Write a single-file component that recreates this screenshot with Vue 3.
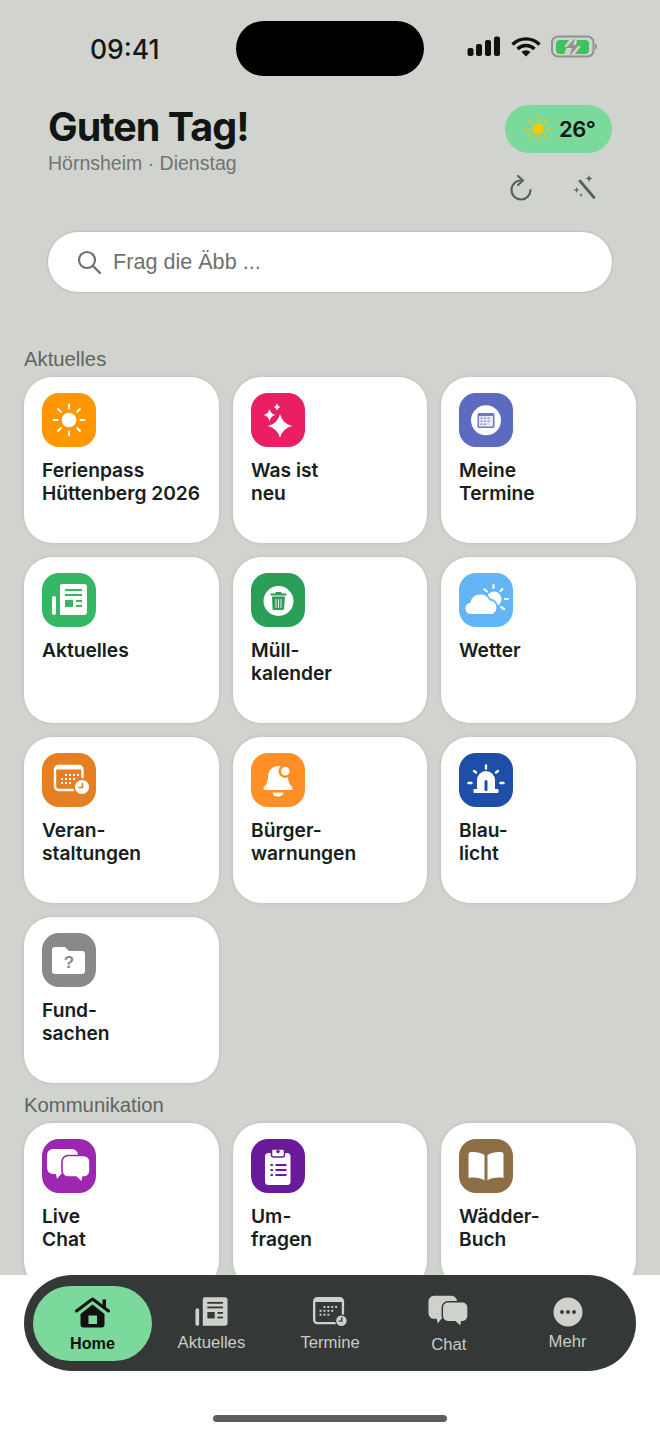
<script setup>
const W = 'fill="#fff"'
const rays = (cx, cy, r1, r2, n, color, sw) => Array.from({ length: n }, (_, i) => {
  const a = (i * 2 * Math.PI) / n
  const p = (v) => v.toFixed(2)
  return `<line x1="${p(cx + r1 * Math.cos(a))}" y1="${p(cy + r1 * Math.sin(a))}" x2="${p(cx + r2 * Math.cos(a))}" y2="${p(cy + r2 * Math.sin(a))}" stroke="${color}" stroke-width="${sw}" stroke-linecap="round"/>`
}).join('')
const star = (x, y, r, k = 0.2) => `<path ${W} d="M${x} ${y - r}Q${x + r * k} ${y - r * k} ${x + r} ${y}Q${x + r * k} ${y + r * k} ${x} ${y + r}Q${x - r * k} ${y + r * k} ${x - r} ${y}Q${x - r * k} ${y - r * k} ${x} ${y - r}Z"/>`

const news = (fg, bg) => `<path fill="${fg}" d="M20 11h22a3 3 0 0 1 3 3v25a3 3 0 0 1-3 3H18V13a2 2 0 0 1 2-2Z"/><rect x="10" y="23" width="4" height="19" rx="2" fill="${fg}"/><rect x="23" y="16" width="17" height="2" fill="${bg}"/><rect x="23" y="21" width="17" height="2" fill="${bg}"/><rect x="23" y="27" width="8" height="7" fill="${bg}"/><rect x="34" y="27" width="6" height="2" fill="${bg}"/><rect x="34" y="32" width="6" height="2" fill="${bg}"/>`
const bubbles = (fg, bg) => `<path fill="${fg}" d="M11 10h19a6 6 0 0 1 6 6v13a6 6 0 0 1-6 6H19l-4 5-1-5h-3a6 6 0 0 1-6-6V16a6 6 0 0 1 6-6Z"/><path fill="${fg}" stroke="${bg}" stroke-width="1.600" d="M26 16.500h16a6 6 0 0 1 6 6v9.500a6 6 0 0 1-6 6h-1l-1 5.500-6-5.500h-8a6 6 0 0 1-6-6v-9.500a6 6 0 0 1 6-6Z"/>`

const sections = [
  {
    title: 'Aktuelles',
    items: [
      { label: ['Ferienpass', 'Hüttenberg 2026'], bg: '#ff9800', svg: `<circle cx="27" cy="27" r="7.300" ${W}/>` + rays(27, 27, 11.500, 15.500, 8, '#fff', 2) },
      { label: ['Was ist', 'neu'], bg: '#e91e63', svg: star(29, 33, 12) + star(18.500, 22, 6) + star(26, 14, 3.500) },
      { label: ['Meine', 'Termine'], bg: '#5c6bc0', svg: `<circle cx="27" cy="27.300" r="15" ${W}/><rect x="18.500" y="20" width="17" height="15" rx="1.500" fill="#6b79c9"/><rect x="20" y="23" width="14" height="10.500" fill="#e4e7f6"/><g fill="#8c98d6"><rect x="21.500" y="24.500" width="2" height="1.500"/><rect x="25" y="24.500" width="2" height="1.500"/><rect x="28.500" y="24.500" width="2" height="1.500"/><rect x="21.500" y="27.500" width="2" height="1.500"/><rect x="25" y="27.500" width="2" height="1.500"/><rect x="28.500" y="27.500" width="2" height="1.500"/><rect x="21.500" y="30.500" width="2" height="1.500"/><rect x="25" y="30.500" width="2" height="1.500"/></g>` },
      { label: ['Aktuelles'], bg: '#35b765', svg: news('#fff', '#35b765') },
      { label: ['Müll-', 'kalender'], bg: '#2b9e58', svg: `<circle cx="27.500" cy="28" r="15" ${W}/><path fill="#2b9e58" d="M25 19h5l.8 1.500h4.700v2h-16v-2h4.700ZM21 23.500h13l-1 12.500a1.500 1.500 0 0 1-1.500 1h-8.500a1.500 1.500 0 0 1-1.500-1Z"/><path stroke="#dff3e6" stroke-width="1" d="M25 26v9M27.500 26v9M30 26v9"/>` },
      { label: ['Wetter'], bg: '#64b5f6', svg: `<g stroke="#fff" stroke-width="2.200" stroke-linecap="round"><line x1="34.500" y1="12" x2="34.500" y2="15"/><line x1="25.500" y1="16.500" x2="28" y2="18.500"/><line x1="43.500" y1="16" x2="41.500" y2="18"/><line x1="46" y1="26" x2="49" y2="26"/><line x1="42" y1="34" x2="45" y2="36"/></g><circle cx="35" cy="26" r="7.500" ${W}/><path ${W} stroke="#64b5f6" stroke-width="1.800" d="M12 42a6.500 6.500 0 0 1-1.500-12.800A11 11 0 0 1 31 26.500a8 8 0 0 1 2 15.500Z"/>` },
      { label: ['Veran-', 'staltungen'], bg: '#e67e22', svg: `<rect x="13" y="13" width="27.500" height="24" rx="3.500" fill="none" stroke="#fff" stroke-width="2.400"/><rect x="13" y="13" width="27" height="3.500" ${W}/><g fill="#fff"><rect x="23" y="21" width="2" height="2"/><rect x="27" y="21" width="2" height="2"/><rect x="31" y="21" width="2" height="2"/><rect x="35" y="21" width="2" height="2"/><rect x="19" y="25" width="2" height="2"/><rect x="23" y="25" width="2" height="2"/><rect x="27" y="25" width="2" height="2"/><rect x="31" y="25" width="2" height="2"/><rect x="19" y="29" width="2" height="2"/><rect x="23" y="29" width="2" height="2"/><rect x="27" y="29" width="2" height="2"/></g><circle cx="40" cy="34" r="8" ${W} stroke="#e67e22" stroke-width="1.800"/><path d="M40.500 30v4.500h-4" fill="none" stroke="#e67e22" stroke-width="1.500"/>` },
      { label: ['Bürger-', 'warnungen'], bg: '#ff8f26', svg: `<path ${W} d="M27 13c-6 0-10 5-10 11 0 5-2 8-4 10-1.200 1.200-.6 3 1 3h26c1.600 0 2.200-1.800 1-3-2-2-4-5-4-10 0-6-4-11-10-11Z"/><path ${W} d="M21.500 39.500h11a5.500 4 0 0 1-11 0Z"/><circle cx="34.300" cy="18.300" r="5.500" ${W} stroke="#ff8f26" stroke-width="2.500"/>` },
      { label: ['Blau-', 'licht'], bg: '#1d4ea8', svg: `<path ${W} d="M18 36V27a9 9 0 0 1 18 0v9Z"/><rect x="14.500" y="36" width="25" height="4" rx="1" ${W}/><rect x="25.500" y="27" width="3" height="11" rx="1.500" fill="#1d4ea8"/><g stroke="#fff" stroke-width="2.400" stroke-linecap="round"><line x1="27" y1="12.500" x2="27" y2="15.500"/><line x1="15" y1="18" x2="17" y2="19.500"/><line x1="39" y1="18" x2="37" y2="19.500"/><line x1="9.500" y1="30" x2="12.500" y2="30"/><line x1="41.500" y1="30" x2="44.500" y2="30"/></g>` },
      { label: ['Fund-', 'sachen'], bg: '#888a89', svg: `<path ${W} d="M13 14h10l4 4h13a3 3 0 0 1 3 3v17a3 3 0 0 1-3 3H13a3 3 0 0 1-3-3V17a3 3 0 0 1 3-3Z"/><text x="27" y="35" text-anchor="middle" font-family="Liberation Sans" font-weight="700" font-size="17" fill="#888a89">?</text>` },
    ],
  },
  {
    title: 'Kommunikation',
    items: [
      { label: ['Live', 'Chat'], bg: '#9c27b0', svg: bubbles('#fff', '#9c27b0') },
      { label: ['Um-', 'fragen'], bg: '#6a1b9a', svg: `<rect x="14" y="14" width="25.500" height="32" rx="3.500" ${W}/><rect x="20.500" y="10" width="13" height="8" rx="2" ${W} stroke="#6a1b9a" stroke-width="1.500"/><circle cx="27" cy="12.500" r="1.700" fill="#6a1b9a"/><g fill="#6a1b9a"><rect x="19.500" y="25" width="2.400" height="2"/><rect x="19.500" y="30" width="2.400" height="2"/><rect x="19.500" y="35" width="2.400" height="2"/><rect x="24.500" y="25" width="11" height="2"/><rect x="24.500" y="30" width="11" height="2"/><rect x="24.500" y="35" width="11" height="2"/></g>` },
      { label: ['Wädder-', 'Buch'], bg: '#8d6e47', svg: `<path ${W} d="M25.500 16C22 13.500 16 12.500 12 13a2.500 2.500 0 0 0-2.500 2.500V39c5-.8 12-.5 16 2.500ZM28.500 16c3.500-2.500 9.500-3.500 13.500-3a2.500 2.500 0 0 1 2.500 2.500V39c-5-.8-12-.5-16 2.500Z"/>` },
    ],
  },
]

const tabs = [
  { label: 'Aktuelles', svg: news('#cfd1cc', '#343937'), w: 33, h: 30, box: '9.500 11 36 32', cls: '' },
  { label: 'Termine', svg: `<rect x="5" y="5" width="37" height="32" rx="4" fill="none" stroke="#cfd1cc" stroke-width="3"/><rect x="5" y="5" width="37" height="5" rx="2" fill="#cfd1cc"/><g fill="#cfd1cc"><rect x="17" y="15" width="2.500" height="2.500"/><rect x="22" y="15" width="2.500" height="2.500"/><rect x="27" y="15" width="2.500" height="2.500"/><rect x="32" y="15" width="2.500" height="2.500"/><rect x="12" y="20" width="2.500" height="2.500"/><rect x="17" y="20" width="2.500" height="2.500"/><rect x="22" y="20" width="2.500" height="2.500"/><rect x="27" y="20" width="2.500" height="2.500"/><rect x="12" y="25" width="2.500" height="2.500"/><rect x="17" y="25" width="2.500" height="2.500"/><rect x="22" y="25" width="2.500" height="2.500"/></g><circle cx="40" cy="34" r="7.500" fill="#cfd1cc" stroke="#343937" stroke-width="1.500"/><path d="M40.500 29.500v5h-4" fill="none" stroke="#343937" stroke-width="1.800"/>`, w: 35, h: 30, box: '3.500 3.500 45 38.500', cls: '' },
  { label: 'Chat', svg: bubbles('#cfd1cc', '#343937'), w: 41, h: 33, box: '4.500 9.500 44.500 35', cls: 'chat' },
  { label: 'Mehr', svg: `<circle cx="15" cy="15" r="14.500" fill="#cfd1cc"/><circle cx="9" cy="15" r="1.900" fill="#343937"/><circle cx="15" cy="15" r="1.900" fill="#343937"/><circle cx="21" cy="15" r="1.900" fill="#343937"/>`, w: 30, h: 30, box: '0 0 30 30', cls: 'more' },
]
const sunSmall = `<ellipse cx="15" cy="15" rx="5.500" ry="6" fill="#f6c800"/>` + rays(15, 15, 9, 12, 8, '#f6c800', 1.600)
</script>

<template>
  <div class="phone">
    <div class="screen">
      <div class="status">
        <span class="time">09:41</span>
        <div class="island"></div>
        <div class="status-icons">
          <svg width="34" height="21" viewBox="0 0 34 21"><rect x="0.500" y="12" width="6" height="8" rx="2" fill="#111"/><rect x="9" y="8" width="6" height="12" rx="2" fill="#111"/><rect x="18" y="4" width="6" height="16" rx="2" fill="#111"/><rect x="27" y="0.500" width="6" height="19.500" rx="2" fill="#111"/></svg>
          <svg width="30" height="21" viewBox="0 0 30 21"><path d="M1.500 8.500a19 19 0 0 1 27 0" fill="none" stroke="#111" stroke-width="3.400"/><path d="M6.500 13a12 12 0 0 1 17 0" fill="none" stroke="#111" stroke-width="3.400"/><path d="M15 20.500 10.500 16a6.500 6.500 0 0 1 9 0Z" fill="#111"/></svg>
          <svg width="47" height="24" viewBox="0 0 47 24"><rect x="1" y="1.500" width="41.500" height="20" rx="6" fill="none" stroke="#8f928e" stroke-width="2"/><path d="M9 5h9l-5 7h3l-3 7H9a4 4 0 0 1-4-4V9a4 4 0 0 1 4-4ZM26 5h8a4 4 0 0 1 4 4v6a4 4 0 0 1-4 4h-10l6-8h-5Z" fill="#3ec35c"/><path d="M24 3 15 13h6l-2.500 8L28 10h-6Z" fill="#8f928e"/><path d="M44 8.500v6a3 3 0 0 0 2-3 3 3 0 0 0-2-3Z" fill="#8f928e"/></svg>
        </div>
      </div>

      <header class="head">
        <div class="greet">
          <h1>Guten Tag!</h1>
          <p>Hörnsheim · Dienstag</p>
        </div>
        <div class="head-right">
          <div class="weather">
            <svg width="30" height="30" viewBox="0 0 30 30" v-html="sunSmall"></svg>
            <span>26°</span>
          </div>
          <div class="tools">
            <svg width="22" height="26" viewBox="0 0 22 26"><path d="M11 5.500A9.500 9.500 0 1 0 20.500 15" fill="none" stroke="#5b615e" stroke-width="2.200" stroke-linecap="round"/><path d="M8 1l5 4.500L8 10" fill="none" stroke="#5b615e" stroke-width="2.200" stroke-linecap="round" stroke-linejoin="round"/></svg>
            <svg width="24" height="24" viewBox="0 0 24 24"><path d="M8 6 22 22.500" fill="none" stroke="#5b615e" stroke-width="2.800" stroke-linecap="round"/><path d="M17 0l1 2.500 2.500 1-2.500 1-1 2.500-1-2.500-2.500-1 2.500-1ZM4.500 12l.8 2.200 2.200.8-2.200.8-.8 2.200-.8-2.200-2.200-.8 2.200-.8ZM9 18l.6 1.400L11 20l-1.400.6L9 22l-.6-1.400L7 20l1.400-.6Z" fill="#5b615e"/></svg>
          </div>
        </div>
      </header>

      <div class="search">
        <svg width="26" height="26" viewBox="0 0 26 26"><circle cx="11" cy="11" r="8" fill="none" stroke="#6d726f" stroke-width="2.200"/><path d="M17 17l7 7" stroke="#6d726f" stroke-width="2.400" stroke-linecap="round"/></svg>
        <span>Frag die Äbb ...</span>
      </div>

      <section v-for="s in sections" :key="s.title" class="sec">
        <h2>{{ s.title }}</h2>
        <div class="grid">
          <div v-for="it in s.items" :key="it.label[0]" class="card">
            <svg class="ico" width="54" height="54" viewBox="0 0 54 54" :style="{ background: it.bg }" v-html="it.svg"></svg>
            <div class="lbl">
              <div v-for="l in it.label" :key="l">{{ l }}</div>
            </div>
          </div>
        </div>
      </section>
    </div>

    <nav class="nav">
      <div class="tab active">
        <svg width="36" height="32" viewBox="0 0 36 32"><path d="M1.500 14 17.500 2l16 12" fill="none" stroke="#111" stroke-width="3" stroke-linecap="round" stroke-linejoin="round"/><rect x="27.500" y="2.500" width="3.500" height="8" fill="#111"/><path fill-rule="evenodd" fill="#111" d="M5.500 17 17.500 7.500 29.500 17v10.500a3 3 0 0 1-3 3h-18a3 3 0 0 1-3-3ZM13.500 18.500v8.500h8.500v-8.500Z"/></svg>
        <span>Home</span>
      </div>
      <div v-for="t in tabs" :key="t.label" class="tab" :class="t.cls">
        <svg :width="t.w" :height="t.h" :viewBox="t.box" v-html="t.svg"></svg>
        <span>{{ t.label }}</span>
      </div>
    </nav>
    <div class="homebar"></div>
  </div>
</template>

<style>
html, body { margin: 0; background: #fff; }
</style>

<style scoped>
.phone {
  width: 660px;
  height: 1435px;
  position: relative;
  overflow: hidden;
  background: #fff;
  font-family: "Liberation Sans", Arial, sans-serif;
  color: #141816;
}
.screen {
  height: 1275px;
  overflow: hidden;
  background: #d1d3ce;
  padding: 21px 24px 0;
  box-sizing: border-box;
}
.status {
  display: grid;
  grid-template-columns: 212px 188px 1fr;
  align-items: center;
  height: 55px;
}
.time {
  font-family: Inter, "Liberation Sans", sans-serif;
  font-size: 26.500px;
  font-weight: 500;
  padding-left: 66px;
}
.island {
  width: 188px;
  height: 55px;
  border-radius: 28px;
  background: #000;
}
.status-icons {
  display: flex;
  align-items: center;
  gap: 10px;
  padding-left: 43px;
  margin-top: -4px;
}
.head {
  display: flex;
  justify-content: space-between;
  padding: 0 24px;
  margin-top: 29px;
  height: 127px;
}
.greet h1 {
  margin: 0;
  font-family: Inter, "Liberation Sans", sans-serif;
  font-size: 39.500px;
  line-height: 44px;
  font-weight: 700;
  letter-spacing: -1px;
  color: #111614;
}
.greet p {
  margin: 2px 0 0;
  font-size: 19.500px;
  line-height: 24px;
  color: #6f7571;
}
.head-right {
  display: flex;
  flex-direction: column;
  align-items: flex-end;
}
.weather {
  width: 107px;
  height: 48px;
  box-sizing: border-box;
  border-radius: 24px;
  background: #7bd99b;
  display: flex;
  align-items: center;
  gap: 6px;
  padding-left: 18px;
  font-family: Inter, "Liberation Sans", sans-serif;
  font-size: 22px;
  font-weight: 600;
  letter-spacing: -0.500px;
}
.tools {
  display: flex;
  gap: 40px;
  margin-top: 22px;
  padding-right: 16px;
}
.search {
  margin: 0 24px;
  height: 60px;
  box-sizing: border-box;
  border-radius: 30px;
  background: #fff;
  box-shadow: 0 0 2px rgba(90, 95, 90, 0.5);
  display: flex;
  align-items: center;
  gap: 11px;
  padding-left: 28px;
  font-size: 21.600px;
  color: #6d726f;
}
.sec {
  margin-top: 13px;
}
.search + .sec {
  margin-top: 58px;
}
.sec h2 {
  margin: 0 0 9px;
  font-size: 20.300px;
  line-height: 18px;
  font-weight: 400;
  color: #5f6561;
}
.grid {
  display: grid;
  grid-template-columns: 195px 194px 195px;
  gap: 14px;
}
.card {
  height: 166px;
  box-sizing: border-box;
  padding: 16px 18px;
  border-radius: 28px;
  background: #fff;
  box-shadow: 0 0 3px rgba(120, 125, 120, 0.35);
}
.ico {
  display: block;
  border-radius: 17px;
}
.lbl {
  margin-top: 12px;
  font-family: Inter, "Liberation Sans", sans-serif;
  font-size: 19.200px;
  line-height: 23px;
  font-weight: 600;
  color: #17201c;
  white-space: nowrap;
}
.nav {
  position: absolute;
  left: 24px;
  top: 1275px;
  width: 612px;
  height: 96px;
  box-sizing: border-box;
  padding: 11px 9px 10px;
  border-radius: 48px;
  background: #343937;
  display: grid;
  grid-template-columns: repeat(5, 1fr);
}
.tab {
  display: flex;
  flex-direction: column;
  align-items: center;
  padding-top: 11px;
  font-size: 16.700px;
  line-height: 20px;
  color: #c9cbc6;
}
.tab span {
  margin-top: 6px;
}
.tab.chat {
  padding-top: 9px;
}
.tab.chat span {
  margin-top: 7px;
}
.tab.more span {
  margin-top: 5px;
}
.tab.active {
  width: 119px;
  border-radius: 38px;
  background: #7bd99b;
  color: #111;
  font-weight: 700;
  font-size: 16.200px;
}
.tab.active span {
  margin-top: 4px;
}
.homebar {
  position: absolute;
  left: 213px;
  top: 1415px;
  width: 234px;
  height: 7px;
  border-radius: 4px;
  background: #5b5e5e;
}
</style>
